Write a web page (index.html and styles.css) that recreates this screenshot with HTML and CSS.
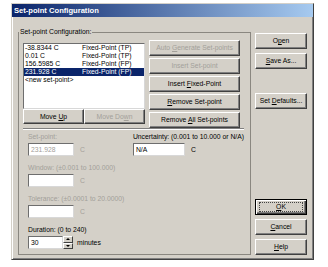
FILE: index.html
```html
<!DOCTYPE html>
<html>
<head>
<meta charset="utf-8">
<title>Set-point Configuration</title>
<link rel="stylesheet" href="styles.css">
</head>
<body>
<div class="dialog">
  <div class="titlebar">Set-point Configuration</div>
  <div class="content">
    <fieldset class="group">
      <legend>Set-point Configuration:</legend>
      <div class="toprow">
        <div class="listcol">
          <div class="list">
            <div class="row"><span class="c1">-38.8344 C</span><span>Fixed-Point (TP)</span></div>
            <div class="row"><span class="c1">0.01 C</span><span>Fixed-Point (TP)</span></div>
            <div class="row"><span class="c1">156.5985 C</span><span>Fixed-Point (FP)</span></div>
            <div class="row sel"><span class="c1">231.928 C</span><span>Fixed-Point (FP)</span></div>
            <div class="row"><span>&lt;new set-point&gt;</span></div>
          </div>
          <div class="moves">
            <button class="btn">Move <u>U</u>p</button>
            <button class="btn dis">Move Do<u>w</u>n</button>
          </div>
        </div>
        <div class="actions">
          <button class="btn dis">Auto <u>G</u>enerate Set-points</button>
          <button class="btn dis">Insert Set-point</button>
          <button class="btn">Insert <u>F</u>ixed-Point</button>
          <button class="btn"><u>R</u>emove Set-point</button>
          <button class="btn">Remove <u>A</u>ll Set-points</button>
        </div>
      </div>
      <div class="sep"></div>
      <div class="fields">
        <div class="col left">
          <div class="field">
            <div class="lbl dis">Set-point:</div>
            <div class="inrow"><div class="edit distext">231.928</div><span class="unit dis">C</span></div>
          </div>
          <div class="field">
            <div class="lbl dis">Window: (±0.001 to 100.000)</div>
            <div class="inrow"><div class="edit"></div><span class="unit dis">C</span></div>
          </div>
          <div class="field">
            <div class="lbl dis">Tolerance: (±0.0001 to 20.0000)</div>
            <div class="inrow"><div class="edit"></div><span class="unit dis">C</span></div>
          </div>
          <div class="field">
            <div class="lbl">Duration: (0 to 240)</div>
            <div class="inrow">
              <div class="edit short">30</div>
              <div class="spin"><div class="sp up"></div><div class="sp down"></div></div>
              <span class="unit mins">minutes</span>
            </div>
          </div>
        </div>
        <div class="col right">
          <div class="field">
            <div class="lbl">Uncertainty: (0.001 to 10.000 or N/A)</div>
            <div class="inrow"><div class="edit wide">N/A</div><span class="unit">C</span></div>
          </div>
        </div>
      </div>
    </fieldset>
    <div class="side">
      <button class="btn">O<u>p</u>en</button>
      <button class="btn save"><u>S</u>ave As...</button>
      <button class="btn defaults">Set <u>D</u>efaults...</button>
      <button class="btn ok"><span class="focus"><u>O</u>K</span></button>
      <button class="btn cancel"><u>C</u>ancel</button>
      <button class="btn help"><u>H</u>elp</button>
    </div>
  </div>
</div>
</body>
</html>
```
FILE: styles.css
```css
* { box-sizing: border-box; }
html, body { margin: 0; padding: 0; background: #fff; }
body {
  font-family: "Liberation Sans", Arial, sans-serif;
  font-size: 6.8px;
  line-height: 8px;
  color: #000;
}
.dialog {
  margin: 3px 0 0 11px;
  width: 303px;
  height: 257px;
  background: #d4d0c8;
  border: 1px solid;
  border-color: #d4d0c8 #404040 #404040 #d4d0c8;
  box-shadow: inset 1px 1px #fff, inset -1px -1px #808080;
  display: flex;
  flex-direction: column;
}
.titlebar {
  height: 13px;
  background: linear-gradient(to right, #0a246a, #a6caf0);
  color: #fff;
  font-weight: bold;
  font-size: 7.6px;
  line-height: 13px;
  padding-left: 2px;
}
.content {
  flex: 1;
  display: flex;
  gap: 4px;
  padding: 0 6px 4px 6px;
}
.group {
  margin: 11px 0 0 0;
  width: 233px;
  min-width: 0;
  padding: 4px 6px 0 4px;
  border: 1px solid #8a8780;
}
.group legend {
  padding: 0 1px;
  margin-left: -4px;
  line-height: 8px;
}
.toprow { display: flex; gap: 4px; }
.listcol { width: 122px; padding-top: 3px; }
.list {
  height: 66px;
  background: #fff;
  border: 1px solid;
  border-color: #6e6e6e #d8d8d8 #d8d8d8 #6e6e6e;
}
.row {
  height: 8px;
  display: flex;
  padding-left: 1px;
  white-space: nowrap;
}
.row .c1 { width: 57px; }
.row.sel { background: #0a246a; color: #fff; }
.moves { display: flex; }
.moves .btn { flex: 1; height: 15px; }
.actions { width: 91px; display: flex; flex-direction: column; gap: 2px; }
.actions .btn { height: 16px; }
.btn {
  font: inherit;
  line-height: 8px;
  margin: 0;
  padding: 0;
  background: #d4d0c8;
  color: #000;
  border: 1px solid;
  border-color: #fff #404040 #404040 #fff;
  box-shadow: inset -1px -1px #808080;
  text-align: center;
  white-space: nowrap;
}
.btn.dis, .dis { color: #a3a09a; }
.sep {
  height: 2px;
  border-top: 1px solid #808080;
  border-bottom: 1px solid #fff;
}
.fields { display: flex; padding: 3px 0 0 5px; }
.col { display: flex; flex-direction: column; gap: 8px; }
.col.left { width: 106px; }
.lbl { height: 8px; margin-bottom: 2px; white-space: nowrap; }
.inrow { display: flex; align-items: center; }
.edit {
  width: 46px;
  height: 13px;
  background: #fff;
  border: 1px solid;
  border-color: #6e6e6e #d8d8d8 #d8d8d8 #6e6e6e;
  padding-left: 2px;
  line-height: 11px;
}
.edit.wide { width: 52px; }
.edit.short { width: 35px; }
.distext { color: #a3a09a; }
.unit { margin-left: 6px; }
.unit.mins { margin-left: 4px; }
.spin { width: 10px; height: 13px; display: flex; flex-direction: column; }
.sp {
  flex: 1;
  background: #d4d0c8;
  border: 1px solid;
  border-color: #fff #404040 #404040 #fff;
  display: flex;
  align-items: center;
  justify-content: center;
}
.sp::after {
  content: "";
  width: 0;
  height: 0;
  border-left: 2px solid transparent;
  border-right: 2px solid transparent;
}
.sp.up::after { border-bottom: 2px solid #000; }
.sp.down::after { border-top: 2px solid #000; }
.side {
  width: 52px;
  display: flex;
  flex-direction: column;
  padding-top: 16px;
}
.side .btn { height: 16px; }
.side .save { margin-top: 4px; }
.side .defaults { margin-top: 24px; }
.side .ok {
  margin-top: auto;
  border-color: #000;
  box-shadow: inset 1px 1px #fff, inset -1px -1px #404040, inset -2px -2px #808080;
  padding: 2px 3px;
}
.ok .focus {
  display: block;
  height: 10px;
  line-height: 8px;
  border: 1px dotted #444;
}
.side .cancel, .side .help { margin-top: 4px; }
```
